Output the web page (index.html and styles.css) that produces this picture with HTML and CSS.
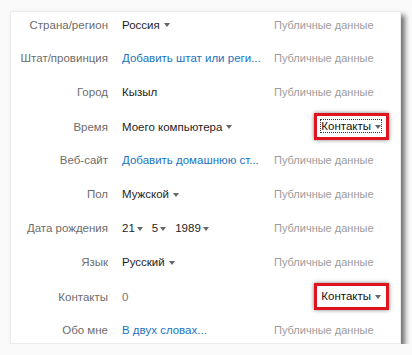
FILE: index.html
```html
<!DOCTYPE html>
<html lang="ru">
<head>
  <meta charset="UTF-8" />
  <meta name="viewport" content="width=device-width, initial-scale=1.0"/>
  <title>Профиль</title>
  <link rel="stylesheet" href="styles.css">
</head>
<body>

<div class="panel">
  <div class="row">
    <div class="label">Страна/регион</div>
    <div class="value"><span class="select">Россия</span></div>
    <div class="access">Публичные данные</div>
  </div>
  <div class="row">
    <div class="label">Штат/провинция</div>
    <div class="value"><a class="link">Добавить штат или реги...</a></div>
    <div class="access">Публичные данные</div>
  </div>
  <div class="row">
    <div class="label">Город</div>
    <div class="value">Кызыл</div>
    <div class="access">Публичные данные</div>
  </div>
  <div class="row">
    <div class="label">Время</div>
    <div class="value"><span class="select">Моего компьютера</span></div>
    <div class="access"><span class="marked"><span class="select focus">Контакты</span></span></div>
  </div>
  <div class="row">
    <div class="label">Веб-сайт</div>
    <div class="value"><a class="link">Добавить домашнюю ст...</a></div>
    <div class="access">Публичные данные</div>
  </div>
  <div class="row">
    <div class="label">Пол</div>
    <div class="value"><span class="select">Мужской</span></div>
    <div class="access">Публичные данные</div>
  </div>
  <div class="row">
    <div class="label">Дата рождения</div>
    <div class="value date">
      <span class="select">21</span>
      <span class="select">5</span>
      <span class="select">1989</span>
    </div>
    <div class="access">Публичные данные</div>
  </div>
  <div class="row">
    <div class="label">Язык</div>
    <div class="value"><span class="select">Русский</span></div>
    <div class="access">Публичные данные</div>
  </div>
  <div class="row">
    <div class="label">Контакты</div>
    <div class="value muted">0</div>
    <div class="access"><span class="marked"><span class="select">Контакты</span></span></div>
  </div>
  <div class="row">
    <div class="label">Обо мне</div>
    <div class="value"><a class="link">В двух словах...</a></div>
    <div class="access">Публичные данные</div>
  </div>
</div>

</body>
</html>
```

FILE: styles.css
```css
body {
  margin: 0;
  background: #fafafa;
  font-family: "Liberation Sans", Arial, sans-serif;
  font-size: 11.5px;
  color: #1e1e1e;
}
.panel {
  margin: 11px 0 0 10px;
  width: 391px;
  background: white;
  border: 1px solid #ececec;
  box-sizing: border-box;
  box-shadow: 4px 4px 5px rgba(0,0,0,0.55);
  display: flex;
  flex-direction: column;
  gap: 8px;
}
.row {
  display: grid;
  grid-template-columns: 97px 138px 1fr;
  column-gap: 14px;
  height: 26px;
  align-items: center;
  white-space: nowrap;
}
.panel .row:first-child { height: 25px; }
.label { text-align: right; color: #6d6d6d; }
.value { color: #1e1e1e; }
.muted { color: #777; }
.link { color: #1a73c0; text-decoration: none; cursor: pointer; }
.access { color: #9c9c9c; display: flex; font-size: 11px; }
.select::after {
  content: "";
  display: inline-block;
  margin-left: 4px;
  vertical-align: middle;
  border-left: 3.5px solid transparent;
  border-right: 3.5px solid transparent;
  border-top: 4px solid #666;
}
.date { display: flex; gap: 9px; }
.date .select::after { margin-left: 2px; }
.marked {
  margin-left: auto;
  margin-right: 11px;
  border: 3px solid #e0141e;
  padding: 4px 5px 5px 4px;
  color: #111;
  font-size: 11.5px;
  box-shadow: 0 0 4px rgba(0,0,0,0.5);
}
.focus { outline: 1px dotted #333; outline-offset: 0; }
```
